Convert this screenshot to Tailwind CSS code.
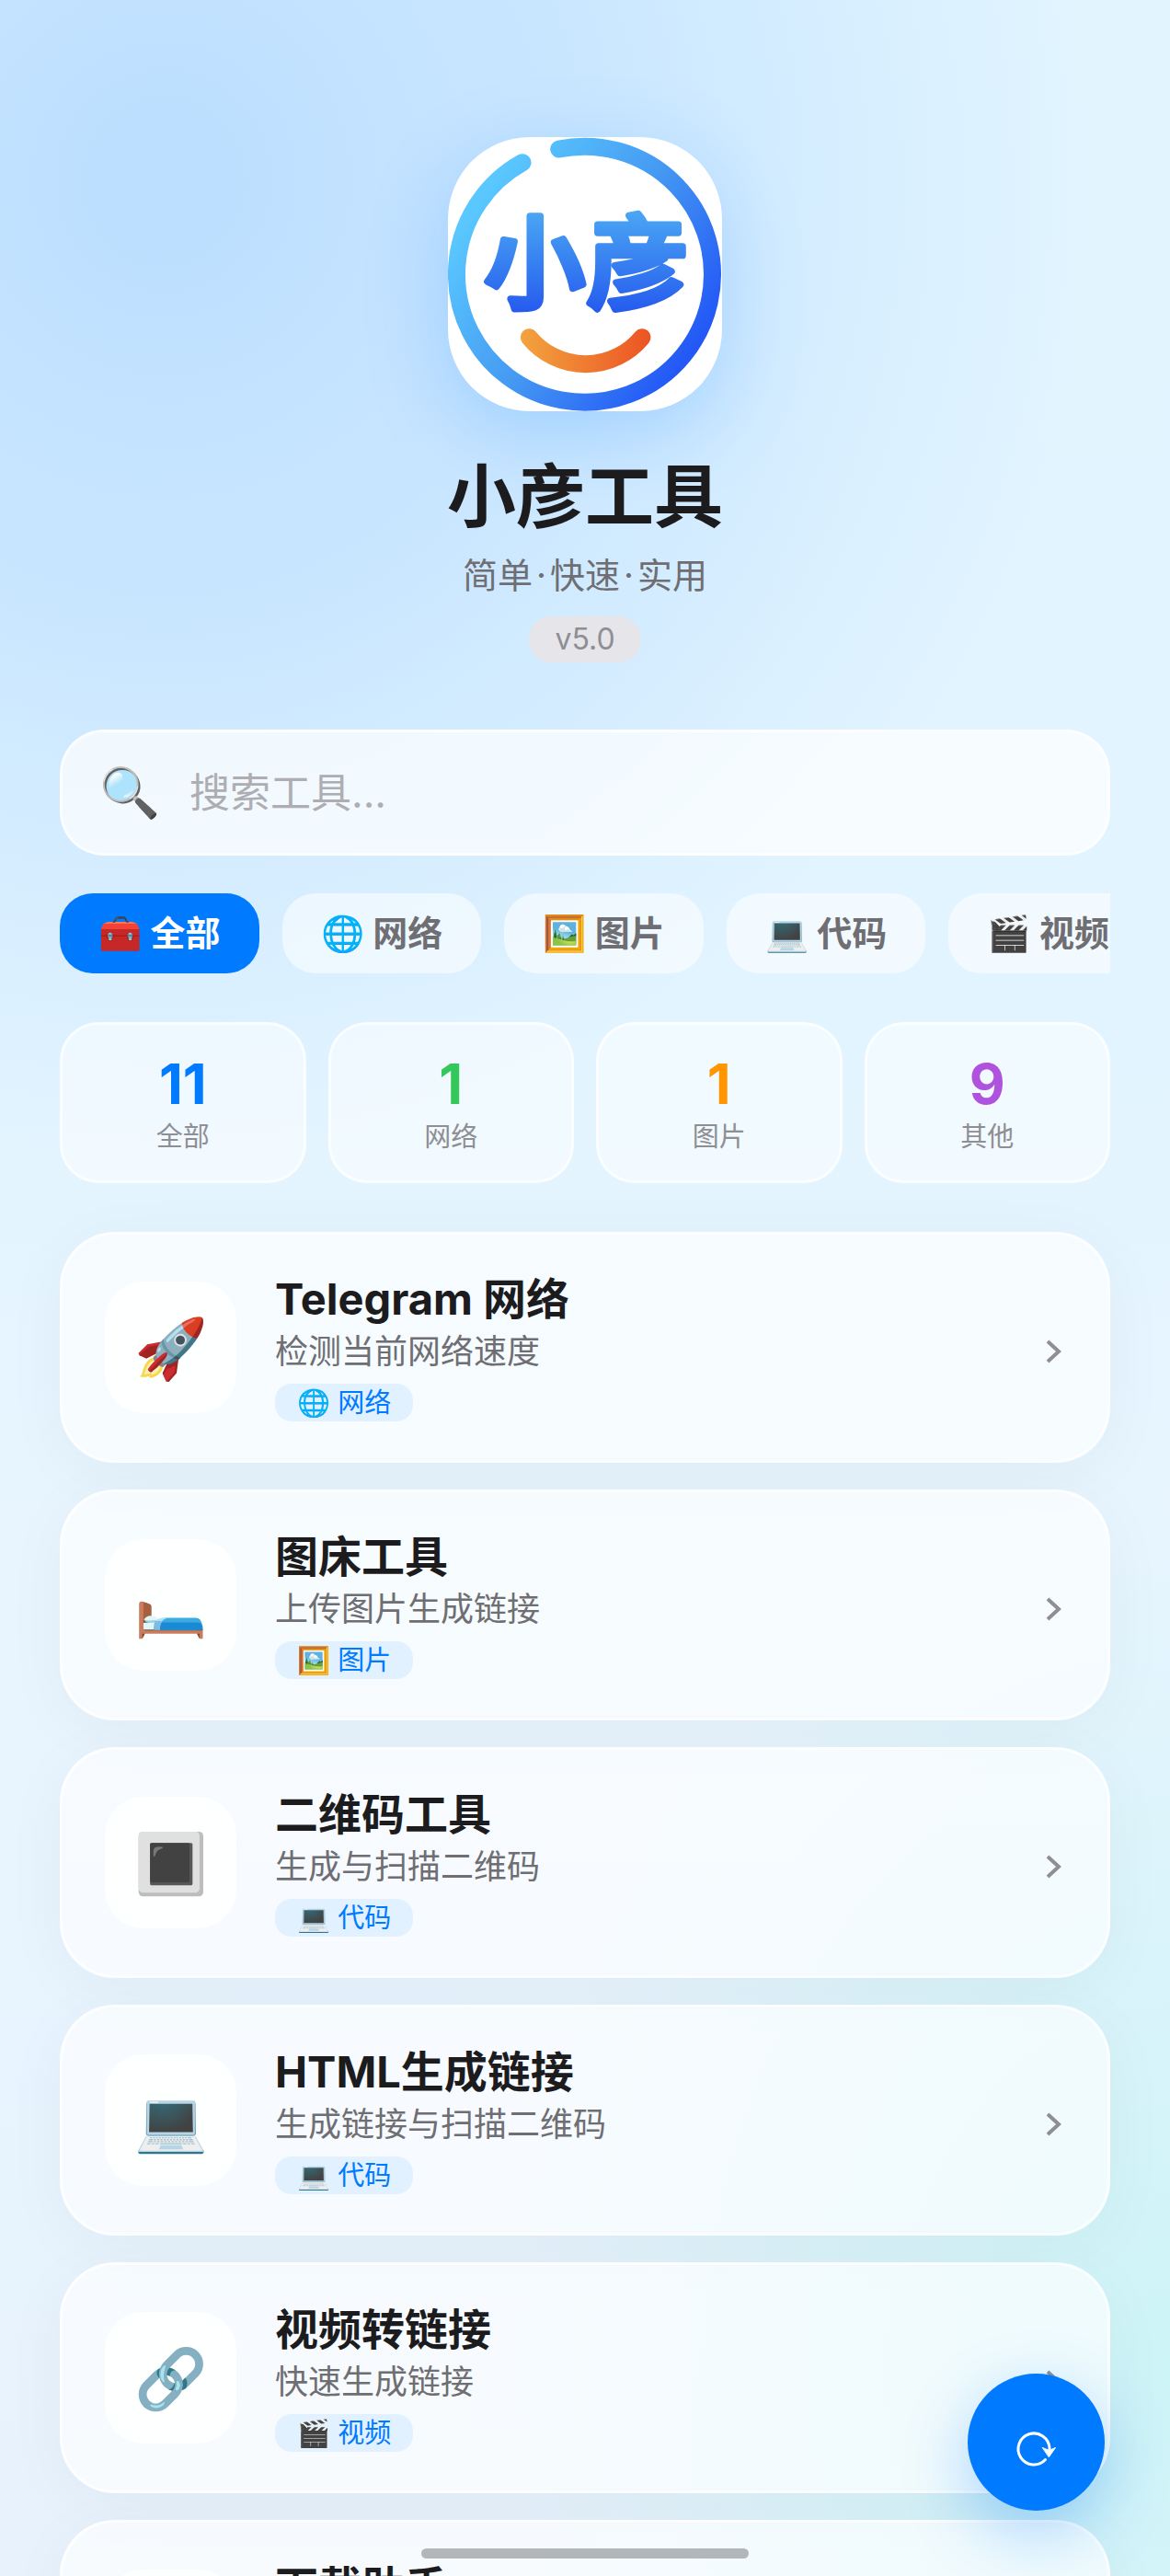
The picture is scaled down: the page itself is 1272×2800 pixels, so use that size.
<!DOCTYPE html>
<html lang="zh-CN">
<head>
<meta charset="utf-8">
<meta name="viewport" content="width=device-width, initial-scale=1">
<title>小彦工具</title>
<script src="https://cdn.jsdelivr.net/npm/@tailwindcss/browser@4"></script>
</head>
<body class="h-screen overflow-hidden font-['Inter','Noto_Sans_CJK_SC',sans-serif] text-[#1c1c1e] bg-[radial-gradient(ellipse_56%_34%_at_100%_92%,#cdf4f7_0%,#cdf4f700_100%),radial-gradient(ellipse_80%_38%_at_14%_7%,#bbdeff_0%,#bbdeffa0_45%,#bbdeff00_100%),linear-gradient(180deg,#e2f5ff_0%,#e2f4ff_40%,#e8f5ff_60%,#e7f2fd_100%)]">

<main class="px-[65px] pt-[149px]">
  <header class="flex flex-col items-center">
    <div class="size-[298px] overflow-hidden rounded-[89px] bg-white shadow-[0_24px_90px_rgba(0,122,255,0.22)]">
      <svg viewBox="81 86 894 894" class="size-full" role="img" aria-label="小彦">
        <defs>
          <linearGradient id="ring" gradientUnits="userSpaceOnUse" x1="150" y1="330" x2="850" y2="820">
            <stop offset="0" stop-color="#5ac8ff"/><stop offset=".5" stop-color="#459af2"/><stop offset="1" stop-color="#2358f6"/>
          </linearGradient>
          <linearGradient id="glyph" gradientUnits="userSpaceOnUse" x1="0" y1="330" x2="0" y2="665">
            <stop offset="0" stop-color="#4aa6f4"/><stop offset="1" stop-color="#2459ee"/>
          </linearGradient>
          <linearGradient id="smile" gradientUnits="userSpaceOnUse" x1="320" y1="0" x2="740" y2="0">
            <stop offset="0" stop-color="#f2a33f"/><stop offset="1" stop-color="#ec5423"/>
          </linearGradient>
        </defs>
        <path d="M443 125A417 417 0 1 1 324 169" fill="none" stroke="url(#ring)" stroke-width="57" stroke-linecap="round"/>
        <g fill="url(#glyph)" stroke="url(#glyph)" stroke-width="22" stroke-linejoin="round" font-weight="500" font-size="328" font-family="'Noto Sans CJK SC', sans-serif">
          <text x="200" y="616">小</text>
          <text x="535" y="616">彦</text>
        </g>
        <path d="M346 739A238 238 0 0 0 714 739" fill="none" stroke="url(#smile)" stroke-width="57" stroke-linecap="round"/>
      </svg>
    </div>
    <h1 class="mt-[53px] text-[75px] leading-[80px] font-bold">小彦工具</h1>
    <p class="mt-5 text-[38px] leading-[50px] text-[#6e6e73]">简单<span class="mx-1">·</span>快速<span class="mx-1">·</span>实用</p>
    <span class="mt-5 rounded-3xl bg-[#e5e5ea] px-7 text-[32px] leading-[50px] text-[#8e8e93]">v5.0</span>
  </header>

  <label class="mt-[73px] flex h-[137px] items-center gap-8 rounded-[48px] border-[3px] border-white/70 bg-white/70 px-10">
    <span class="text-[53px] leading-none">🔍</span>
    <input type="search" aria-label="搜索工具" placeholder="搜索工具..." class="min-w-0 flex-1 bg-transparent text-[44px] outline-none placeholder:text-[#aeaeb2]">
  </label>

  <nav class="mt-[41px] flex gap-[25px] overflow-hidden text-[38px] leading-[87px] font-semibold text-[#6e6e73]">
    <button class="shrink-0 rounded-[36px] bg-[#007aff] px-[42px] text-white">🧰 全部</button>
    <button class="shrink-0 rounded-[36px] bg-white/55 px-[42px]">🌐 网络</button>
    <button class="shrink-0 rounded-[36px] bg-white/55 px-[42px]">🖼️ 图片</button>
    <button class="shrink-0 rounded-[36px] bg-white/55 px-[42px]">💻 代码</button>
    <button class="shrink-0 rounded-[36px] bg-white/55 px-[42px]">🎬 视频</button>
  </nav>

  <section class="mt-[53px] grid grid-cols-4 gap-6 text-center text-[29px] text-[#8e8e93]">
    <div class="h-[175px] rounded-[42px] border-[3px] border-white/70 bg-white/50 pt-[30px]"><div class="text-[60px] leading-[68px] font-bold text-[#007aff]">11</div><div class="mt-1 leading-10">全部</div></div>
    <div class="h-[175px] rounded-[42px] border-[3px] border-white/70 bg-white/50 pt-[30px]"><div class="text-[60px] leading-[68px] font-bold text-[#34c759]">1</div><div class="mt-1 leading-10">网络</div></div>
    <div class="h-[175px] rounded-[42px] border-[3px] border-white/70 bg-white/50 pt-[30px]"><div class="text-[60px] leading-[68px] font-bold text-[#ff9500]">1</div><div class="mt-1 leading-10">图片</div></div>
    <div class="h-[175px] rounded-[42px] border-[3px] border-white/70 bg-white/50 pt-[30px]"><div class="text-[60px] leading-[68px] font-bold text-[#af52de]">9</div><div class="mt-1 leading-10">其他</div></div>
  </section>

  <section class="mt-[53px] flex flex-col gap-[29px]">
    <a href="#" class="flex h-[251px] items-center rounded-[60px] border-[3px] border-white/70 bg-white/65 pl-[46px] pr-12 shadow-[0_12px_72px_rgba(0,0,0,0.04)]">
      <span class="grid size-[143px] shrink-0 place-items-center rounded-[42px] bg-white/90 text-[64px] leading-none">🚀</span>
      <span class="ml-[42px] flex flex-1 flex-col items-start">
        <span class="text-[47px] leading-[56px] font-bold">Telegram 网络</span>
        <span class="mt-1.5 text-[36px] leading-[46px] text-[#6e6e73]">检测当前网络速度</span>
        <span class="mt-3 rounded-[18px] bg-[#e1f1ff] px-6 text-[29px] leading-[41px] text-[#007aff]">🌐 网络</span>
      </span>
      <svg viewBox="0 0 20 30" class="mt-2 h-[30px] w-5" fill="none" stroke="#8e8e93" stroke-width="4"><path d="M3 4 15 15 3 26"/></svg>
    </a>
    <a href="#" class="flex h-[251px] items-center rounded-[60px] border-[3px] border-white/70 bg-white/65 pl-[46px] pr-12 shadow-[0_12px_72px_rgba(0,0,0,0.04)]">
      <span class="grid size-[143px] shrink-0 place-items-center rounded-[42px] bg-white/90 text-[64px] leading-none">🛏️</span>
      <span class="ml-[42px] flex flex-1 flex-col items-start">
        <span class="text-[47px] leading-[56px] font-bold">图床工具</span>
        <span class="mt-1.5 text-[36px] leading-[46px] text-[#6e6e73]">上传图片生成链接</span>
        <span class="mt-3 rounded-[18px] bg-[#e1f1ff] px-6 text-[29px] leading-[41px] text-[#007aff]">🖼️ 图片</span>
      </span>
      <svg viewBox="0 0 20 30" class="mt-2 h-[30px] w-5" fill="none" stroke="#8e8e93" stroke-width="4"><path d="M3 4 15 15 3 26"/></svg>
    </a>
    <a href="#" class="flex h-[251px] items-center rounded-[60px] border-[3px] border-white/70 bg-white/65 pl-[46px] pr-12 shadow-[0_12px_72px_rgba(0,0,0,0.04)]">
      <span class="grid size-[143px] shrink-0 place-items-center rounded-[42px] bg-white/90 text-[64px] leading-none">🔳</span>
      <span class="ml-[42px] flex flex-1 flex-col items-start">
        <span class="text-[47px] leading-[56px] font-bold">二维码工具</span>
        <span class="mt-1.5 text-[36px] leading-[46px] text-[#6e6e73]">生成与扫描二维码</span>
        <span class="mt-3 rounded-[18px] bg-[#e1f1ff] px-6 text-[29px] leading-[41px] text-[#007aff]">💻 代码</span>
      </span>
      <svg viewBox="0 0 20 30" class="mt-2 h-[30px] w-5" fill="none" stroke="#8e8e93" stroke-width="4"><path d="M3 4 15 15 3 26"/></svg>
    </a>
    <a href="#" class="flex h-[251px] items-center rounded-[60px] border-[3px] border-white/70 bg-white/65 pl-[46px] pr-12 shadow-[0_12px_72px_rgba(0,0,0,0.04)]">
      <span class="grid size-[143px] shrink-0 place-items-center rounded-[42px] bg-white/90 text-[64px] leading-none">💻</span>
      <span class="ml-[42px] flex flex-1 flex-col items-start">
        <span class="text-[47px] leading-[56px] font-bold">HTML生成链接</span>
        <span class="mt-1.5 text-[36px] leading-[46px] text-[#6e6e73]">生成链接与扫描二维码</span>
        <span class="mt-3 rounded-[18px] bg-[#e1f1ff] px-6 text-[29px] leading-[41px] text-[#007aff]">💻 代码</span>
      </span>
      <svg viewBox="0 0 20 30" class="mt-2 h-[30px] w-5" fill="none" stroke="#8e8e93" stroke-width="4"><path d="M3 4 15 15 3 26"/></svg>
    </a>
    <a href="#" class="flex h-[251px] items-center rounded-[60px] border-[3px] border-white/70 bg-white/65 pl-[46px] pr-12 shadow-[0_12px_72px_rgba(0,0,0,0.04)]">
      <span class="grid size-[143px] shrink-0 place-items-center rounded-[42px] bg-white/90 text-[64px] leading-none">🔗</span>
      <span class="ml-[42px] flex flex-1 flex-col items-start">
        <span class="text-[47px] leading-[56px] font-bold">视频转链接</span>
        <span class="mt-1.5 text-[36px] leading-[46px] text-[#6e6e73]">快速生成链接</span>
        <span class="mt-3 rounded-[18px] bg-[#e1f1ff] px-6 text-[29px] leading-[41px] text-[#007aff]">🎬 视频</span>
      </span>
      <svg viewBox="0 0 20 30" class="mt-2 h-[30px] w-5" fill="none" stroke="#8e8e93" stroke-width="4"><path d="M3 4 15 15 3 26"/></svg>
    </a>
    <a href="#" class="flex h-[251px] items-center rounded-[60px] border-[3px] border-white/70 bg-white/65 pl-[46px] pr-12 shadow-[0_12px_72px_rgba(0,0,0,0.04)]">
      <span class="grid size-[143px] shrink-0 place-items-center rounded-[42px] bg-white/90 text-[64px] leading-none">📥</span>
      <span class="ml-[42px] flex flex-1 flex-col items-start">
        <span class="text-[47px] leading-[56px] font-bold">下载助手</span>
        <span class="mt-1.5 text-[36px] leading-[46px] text-[#6e6e73]">快速下载文件</span>
        <span class="mt-3 rounded-[18px] bg-[#e1f1ff] px-6 text-[29px] leading-[41px] text-[#007aff]">🎬 视频</span>
      </span>
      <svg viewBox="0 0 20 30" class="mt-2 h-[30px] w-5" fill="none" stroke="#8e8e93" stroke-width="4"><path d="M3 4 15 15 3 26"/></svg>
    </a>
  </section>
</main>

<button aria-label="刷新" class="fixed right-[71px] bottom-[71px] grid size-[149px] place-items-center rounded-full bg-[#007aff] shadow-[0_24px_72px_rgba(0,122,255,0.3)]">
  <svg viewBox="0 0 48 48" class="mt-4 size-12" fill="none" stroke="#fff" stroke-width="3" stroke-linecap="round">
    <path d="M33.500 34.500A17 17 0 1 1 38 22V26"/>
    <path d="M30.500 21.500 37.500 24.500 44.500 21.500 37.500 31.500Z" fill="#fff" stroke-width="1" stroke-linejoin="round"/>
  </svg>
</button>
<div class="fixed bottom-[19px] left-1/2 h-[11px] w-[356px] -translate-x-1/2 rounded-full bg-black/27"></div>
</body>
</html>
